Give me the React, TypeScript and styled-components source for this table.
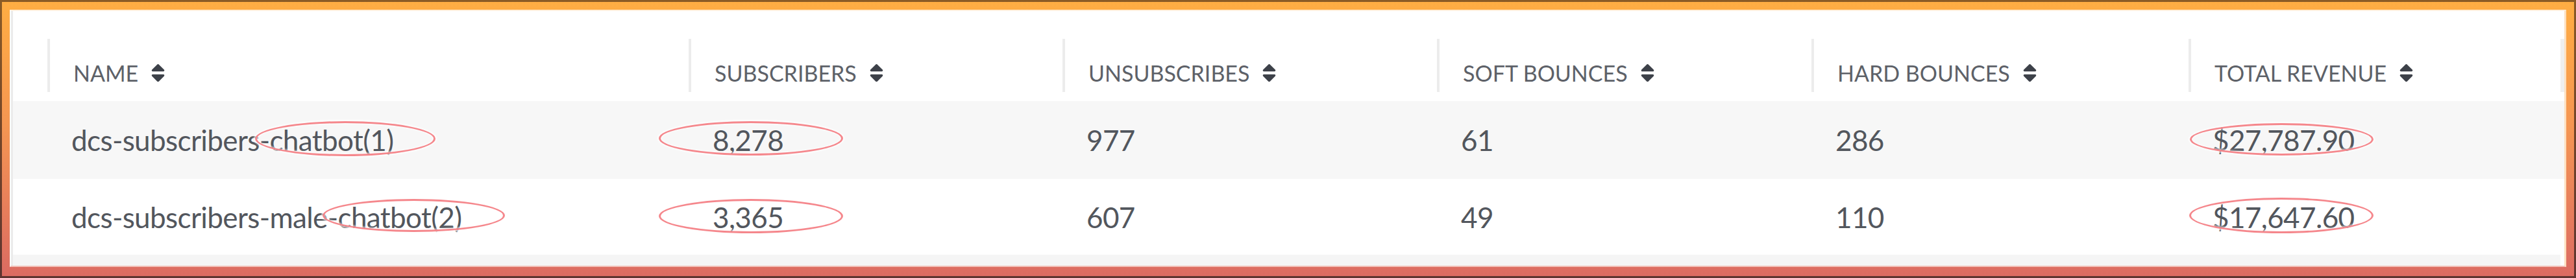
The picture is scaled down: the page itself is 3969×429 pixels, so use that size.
import styled, { createGlobalStyle } from "styled-components";
import { FaSort } from "react-icons/fa";

const GlobalStyle = createGlobalStyle`
  html, body {
    margin: 0;
    padding: 0;
    background: #ffffff;
  }
  body {
    font-family: Lato, "Noto Sans", "Liberation Sans", sans-serif;
  }
`;

const Frame = styled.div`
  width: 3969px;
  height: 429px;
  box-sizing: border-box;
  padding: 3px;
  background: linear-gradient(180deg, #8b5b26 0%, #724428 50%, #5f3430 100%);
`;

const Glow = styled.div`
  height: 100%;
  box-sizing: border-box;
  padding: 12px 12px 14px;
  background: linear-gradient(180deg, #ffad43 0%, #f59652 45%, #dc6b62 100%);
`;

const Card = styled.div`
  height: 100%;
  box-sizing: border-box;
  background: #ffffff;
  border: 2px solid #fbfbfb;
  border-top-color: #fff0dc;
  border-right: 3px solid #fde0c0;
  border-bottom-color: #f2c0b8;
  display: flex;
  flex-direction: column;
`;

const Table = styled.div`
  flex: 1;
  display: flex;
  flex-direction: column;
  border-left: 3px solid #ebebeb;
`;

const columns = "53px 988px 576px 577px 577px 581px 1fr";

const HeaderRow = styled.div`
  display: grid;
  grid-template-columns: ${columns};
  height: 139px;
  box-sizing: border-box;
  padding: 43px 0 14px;
`;

const HeaderCell = styled.div<{ $last?: boolean }>`
  display: flex;
  align-items: center;
  gap: 13px;
  box-sizing: border-box;
  padding: 22px 0 0 36px;
  border-left: 4px solid #ececec;
  border-right: ${(p) => (p.$last ? "6px solid #efefef" : "none")};
  font-size: 34px;
  color: #5d6168;
  text-transform: uppercase;
  white-space: nowrap;

  svg {
    color: #3d4149;
    font-size: 35px;
  }
`;

const Row = styled.div<{ $striped?: boolean; $height: number }>`
  display: grid;
  grid-template-columns: ${columns};
  height: ${(p) => p.$height}px;
  background: ${(p) => (p.$striped ? "#f7f7f7" : "#ffffff")};
`;

const Cell = styled.div`
  position: relative;
  display: flex;
  align-items: center;
  padding-left: 37px;
  font-size: 44px;
  letter-spacing: -0.6px;
  color: #52565d;
  white-space: nowrap;
`;

const Oval = styled.span<{ $left: number; $top: number; $w: number; $h: number }>`
  position: absolute;
  left: ${(p) => p.$left}px;
  top: ${(p) => p.$top}px;
  width: ${(p) => p.$w}px;
  height: ${(p) => p.$h}px;
  box-sizing: border-box;
  border: 3px solid #f5878c;
  border-radius: 50%;
  box-shadow: 0 0 3px 2px rgba(255, 255, 255, 0.9),
    inset 0 0 3px 1px rgba(255, 255, 255, 0.9);
  pointer-events: none;
`;

const Footer = styled.div`
  flex: 1;
  margin-right: 6px;
  background: #f5f5f5;
`;

type Mark = { left: number; top: number; w: number; h: number };

type Campaign = {
  name: string;
  subscribers: string;
  unsubscribes: string;
  soft: string;
  hard: string;
  revenue: string;
  height: number;
  marks: { name: Mark; subscribers: Mark; revenue: Mark };
};

const headers = [
  "Name",
  "Subscribers",
  "Unsubscribes",
  "Soft Bounces",
  "Hard Bounces",
  "Total Revenue",
];

const campaigns: Campaign[] = [
  {
    name: "dcs-subscribers-chatbot(1)",
    subscribers: "8,278",
    unsubscribes: "977",
    soft: "61",
    hard: "286",
    revenue: "$27,787.90",
    height: 120,
    marks: {
      name: { left: 320, top: 31, w: 278, h: 54 },
      subscribers: { left: -46, top: 31, w: 284, h: 53 },
      revenue: { left: 2, top: 34, w: 283, h: 50 },
    },
  },
  {
    name: "dcs-subscribers-male-chatbot(2)",
    subscribers: "3,365",
    unsubscribes: "607",
    soft: "49",
    hard: "110",
    revenue: "$17,647.60",
    height: 117,
    marks: {
      name: { left: 424, top: 31, w: 281, h: 51 },
      subscribers: { left: -46, top: 31, w: 284, h: 53 },
      revenue: { left: 1, top: 29, w: 284, h: 55 },
    },
  },
];

const Ring = ({ m }: { m: Mark }) => (
  <Oval $left={m.left} $top={m.top} $w={m.w} $h={m.h} />
);

const App = () => {
  return (
    <>
      <GlobalStyle />
      <Frame>
        <Glow>
          <Card>
            <Table>
              <HeaderRow>
                <div />
                {headers.map((h, i) => (
                  <HeaderCell key={h} $last={i === headers.length - 1}>
                    {h}
                    <FaSort />
                  </HeaderCell>
                ))}
              </HeaderRow>
              {campaigns.map((c, i) => (
                <Row key={c.name} $striped={i % 2 === 0} $height={c.height}>
                  <div />
                  <Cell>
                    {c.name}
                    <Ring m={c.marks.name} />
                  </Cell>
                  <Cell>
                    {c.subscribers}
                    <Ring m={c.marks.subscribers} />
                  </Cell>
                  <Cell>{c.unsubscribes}</Cell>
                  <Cell>{c.soft}</Cell>
                  <Cell>{c.hard}</Cell>
                  <Cell>
                    {c.revenue}
                    <Ring m={c.marks.revenue} />
                  </Cell>
                </Row>
              ))}
              <Footer />
            </Table>
          </Card>
        </Glow>
      </Frame>
    </>
  );
};

export default App;
